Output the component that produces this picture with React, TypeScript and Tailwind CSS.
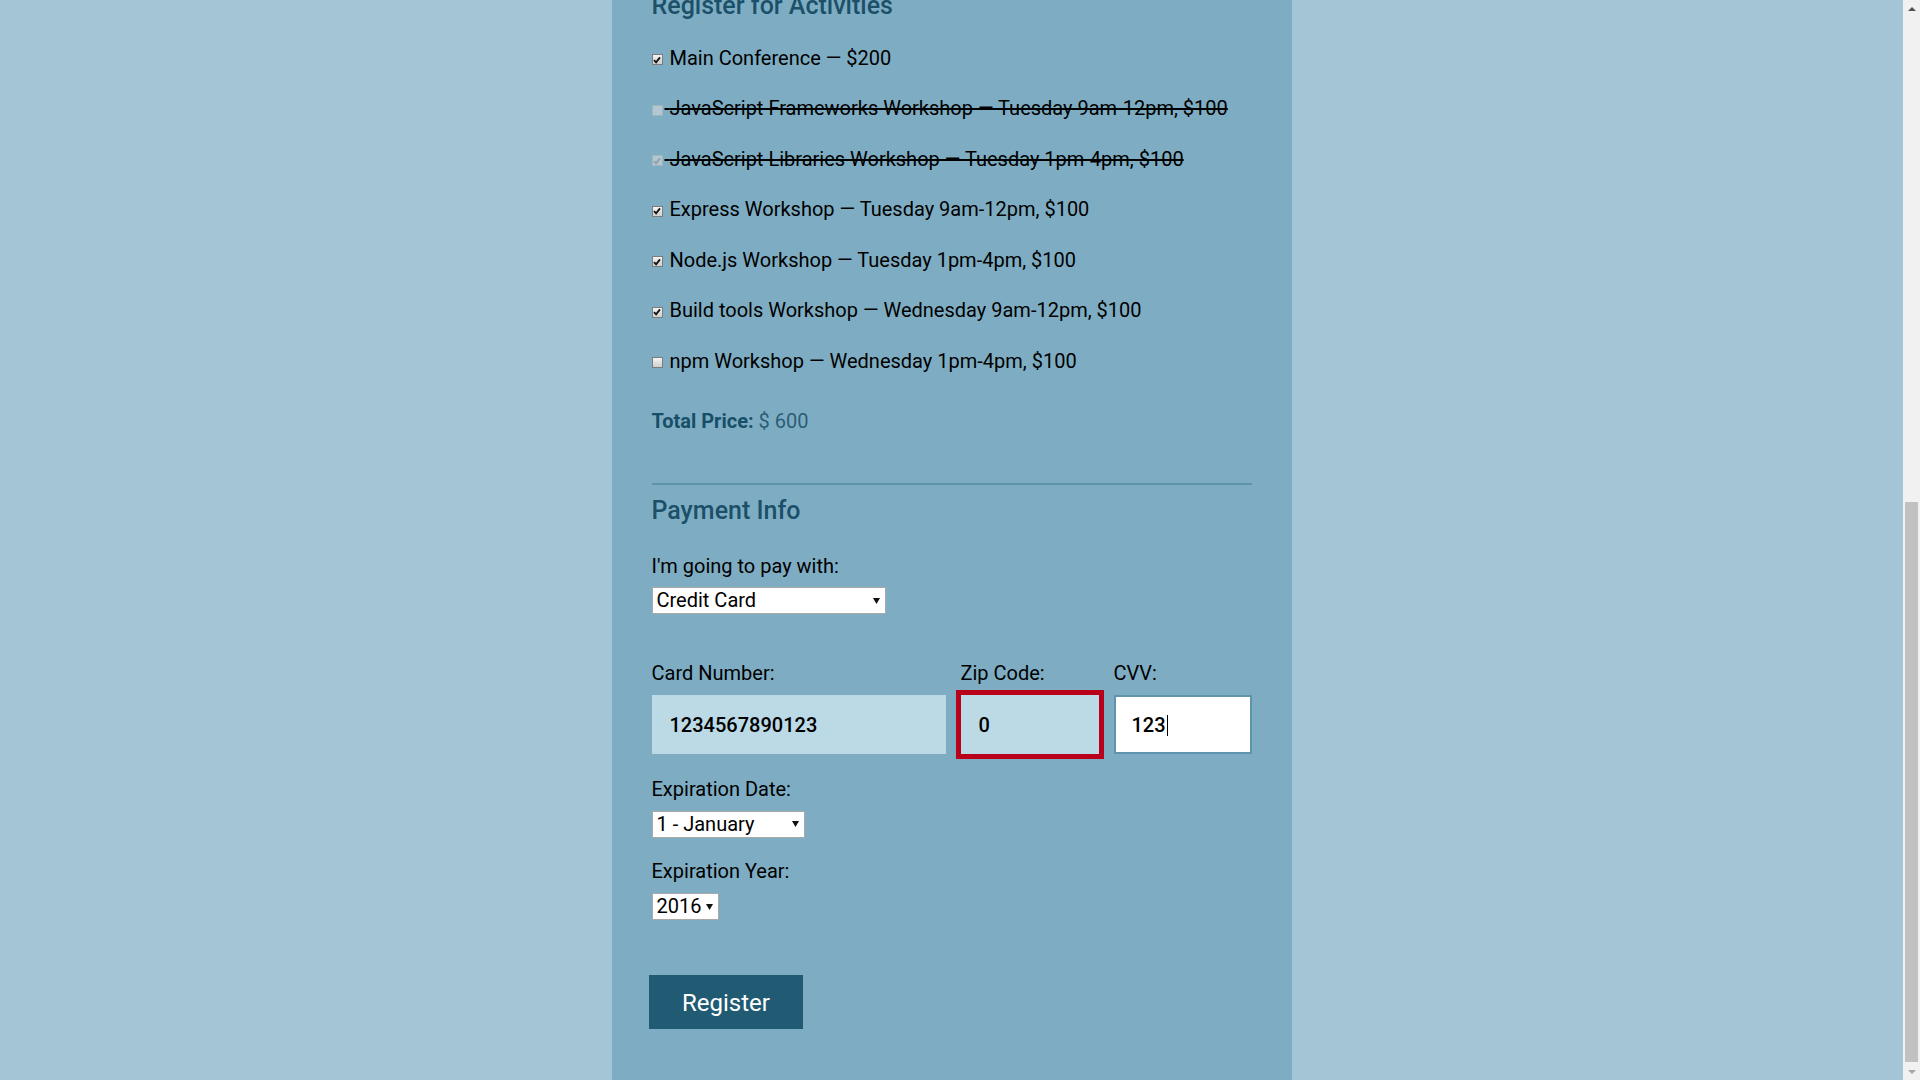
import React, { useLayoutEffect, useRef } from 'react';

type Activity = {
  label: string;
  checked: boolean;
  disabled?: boolean;
};

const activities: Activity[] = [
  { label: 'Main Conference — $200', checked: true },
  { label: 'JavaScript Frameworks Workshop — Tuesday 9am-12pm, $100', checked: false, disabled: true },
  { label: 'JavaScript Libraries Workshop — Tuesday 1pm-4pm, $100', checked: true, disabled: true },
  { label: 'Express Workshop — Tuesday 9am-12pm, $100', checked: true },
  { label: 'Node.js Workshop — Tuesday 1pm-4pm, $100', checked: true },
  { label: 'Build tools Workshop — Wednesday 9am-12pm, $100', checked: true },
  { label: 'npm Workshop — Wednesday 1pm-4pm, $100', checked: false },
];

function CheckBox({ checked, disabled }: { checked: boolean; disabled?: boolean }) {
  const box = disabled
    ? 'border-[#9fb6c1] bg-[#b2c7d0]'
    : 'border-[#7c7c7c] bg-linear-to-b from-[#f4f4f4] to-[#cfcfcf]';
  return (
    <span
      className={`mr-[2px] inline-flex h-[11px] w-[11px] items-center justify-center border align-middle ${box}`}
    >
      {checked && (
        <svg viewBox="0 0 8 8" className="h-[8px] w-[8px]">
          <path
            d="M1 4.2 L3.1 6.4 L7 1.4"
            fill="none"
            stroke={disabled ? '#8fa2ab' : '#151515'}
            strokeWidth="1.9"
          />
        </svg>
      )}
    </span>
  );
}

function Select({ value, width }: { value: string; width: string }) {
  return (
    <div className={`relative h-[27px] ${width}`}>
      <select
        defaultValue={value}
        className="h-[27px] w-full appearance-none rounded-none border border-[#a9a9a9] bg-white pl-[4px] text-[20px] leading-[23px] text-black outline-none"
      >
        <option>{value}</option>
      </select>
      <svg
        viewBox="0 0 7 6"
        className="pointer-events-none absolute right-[6px] top-[10.5px] h-[6px] w-[7px]"
      >
        <path d="M0 0 H7 L3.5 6 Z" fill="#111" />
      </svg>
    </div>
  );
}

function FieldLabel({ children, className = '' }: { children: React.ReactNode; className?: string }) {
  return <label className={`block h-[24px] text-[20px] leading-[24px] text-black ${className}`}>{children}</label>;
}

function ScrollBar() {
  return (
    <div className="flex h-screen w-[17px] shrink-0 flex-col bg-[#f1f1f1]">
      <div className="flex h-[17px] items-center justify-center">
        <svg viewBox="0 0 8 4" className="h-[4px] w-[8px]">
          <path d="M0 4 L4 0 L8 4 Z" fill="#505050" />
        </svg>
      </div>
      <div className="flex flex-1 flex-col items-center justify-end pb-[1px]">
        <div className="h-[560px] w-[13px] bg-[#c1c1c1]" />
      </div>
      <div className="flex h-[17px] items-center justify-center">
        <svg viewBox="0 0 8 4" className="h-[4px] w-[8px]">
          <path d="M0 0 L8 0 L4 4 Z" fill="#a3a3a3" />
        </svg>
      </div>
    </div>
  );
}

export default function App() {
  const scrollRef = useRef<HTMLDivElement>(null);

  useLayoutEffect(() => {
    const el = scrollRef.current;
    if (el) el.scrollTop = el.scrollHeight;
  }, []);

  return (
    <div className="flex h-screen bg-[#a3c5d6] font-[Roboto,sans-serif]">
      <div ref={scrollRef} className="h-screen flex-1 overflow-hidden">
        <div className="mx-auto w-[680px] bg-[#7eadc3] px-[40px] pb-[50.6px]">
          {/* earlier part of the form, scrolled out of view */}
          <div className="flex h-[928px] flex-col overflow-hidden pt-[40px]">
            <h1 className="text-[40px] font-medium leading-[48px] text-[#184f68]">Full Stack Conf</h1>
            <p className="mt-[4px] text-[20px] leading-[24px] text-[#184f68]">A Celebration of Web Development</p>
            <h2 className="mt-[40px] text-[25px] font-medium leading-[30px] text-[#1c5069]">Basic Info</h2>
            <FieldLabel className="mt-[24px]">Name:</FieldLabel>
            <input className="mt-[10px] h-[59px] w-full border-2 border-[#bbdae6] bg-[#bbdae6] px-[16px] text-[20px]" />
            <FieldLabel className="mt-[23px]">Email:</FieldLabel>
            <input className="mt-[10px] h-[59px] w-full border-2 border-[#bbdae6] bg-[#bbdae6] px-[16px] text-[20px]" />
            <FieldLabel className="mt-[23px]">Job Role:</FieldLabel>
            <div className="mt-[10px]">
              <Select value="Full Stack JavaScript Developer" width="w-[320px]" />
            </div>
            <div className="mt-[50px] border-t-2 border-[#5f93ab]" />
            <h2 className="mt-[11.4px] text-[25px] font-medium leading-[30px] text-[#1c5069]">T-Shirt Info</h2>
            <div className="mt-[24px] flex gap-[30px]">
              <div>
                <FieldLabel>Size:</FieldLabel>
                <div className="mt-[10px]">
                  <Select value="S" width="w-[60px]" />
                </div>
              </div>
              <div>
                <FieldLabel>Design:</FieldLabel>
                <div className="mt-[10px]">
                  <Select value="Theme - JS Puns" width="w-[190px]" />
                </div>
              </div>
            </div>
            <FieldLabel className="mt-[23px]">Color:</FieldLabel>
            <div className="mt-[10px]">
              <Select value="Cornflower Blue (JS Puns shirt only)" width="w-[360px]" />
            </div>
            <div className="mt-[50px] border-t-2 border-[#5f93ab]" />
          </div>

          <h2 className="h-[30px] text-[25px] font-medium leading-[30px] text-[#1c5069]">Register for Activities</h2>

          <div className="mt-[11.9px]">
            {activities.map((a) => (
              <label
                key={a.label}
                className={`block h-[50.5px] whitespace-nowrap text-[20px] leading-[50.5px] text-black ${
                  a.disabled ? 'line-through decoration-2' : ''
                }`}
              >
                <CheckBox checked={a.checked} disabled={a.disabled} /> {a.label}
              </label>
            ))}
          </div>

          <p className="mt-[22.5px] h-[24px] text-[20px] leading-[24px] text-[#2b5d75]">
            <span className="font-bold text-[#184f68]">Total Price:</span> $ 600
          </p>

          <div className="mt-[50px] border-t-2 border-[#5f93ab]" />

          <h2 className="mt-[11.4px] h-[30px] text-[25px] font-medium leading-[30px] text-[#1c5069]">Payment Info</h2>

          <FieldLabel className="mt-[28.1px]">I'm going to pay with:</FieldLabel>
          <div className="mt-[9px]">
            <Select value="Credit Card" width="w-[234.5px]" />
          </div>

          <div className="mt-[47px] flex gap-[15px]">
            <div className="w-[294px]">
              <FieldLabel>Card Number:</FieldLabel>
              <input
                defaultValue="1234567890123"
                className="mt-[10px] h-[59px] w-full border-2 border-[#bbdae6] bg-[#bbdae6] px-[16px] text-[20px] font-medium text-black outline-none"
              />
            </div>
            <div className="w-[138px]">
              <FieldLabel>Zip Code:</FieldLabel>
              <input
                defaultValue="0"
                className="mt-[10px] h-[59px] w-full border-2 border-[#bbdae6] bg-[#bbdae6] px-[16px] text-[20px] font-medium text-black [outline:5px_solid_#b9001b]"
              />
            </div>
            <div className="w-[138px]">
              <FieldLabel>CVV:</FieldLabel>
              <div className="relative mt-[10px]">
                <input
                  defaultValue="123"
                  className="h-[59px] w-full border-2 border-[#5e94ad] bg-white px-[16px] text-[20px] font-medium text-black outline-none"
                />
                <span className="pointer-events-none absolute left-[53px] top-[20px] h-[21px] w-px bg-black" />
              </div>
            </div>
          </div>

          <FieldLabel className="mt-[23px]">Expiration Date:</FieldLabel>
          <div className="mt-[9.5px]">
            <Select value="1 - January" width="w-[153px]" />
          </div>

          <FieldLabel className="mt-[21.5px]">Expiration Year:</FieldLabel>
          <div className="mt-[10px]">
            <Select value="2016" width="w-[67.5px]" />
          </div>

          <button
            type="button"
            className="-ml-[2.5px] mt-[55px] block h-[54px] bg-[#215a73] px-[33px] text-[24px] leading-[56px] text-white"
          >
            Register
          </button>
        </div>
      </div>
      <ScrollBar />
    </div>
  );
}
